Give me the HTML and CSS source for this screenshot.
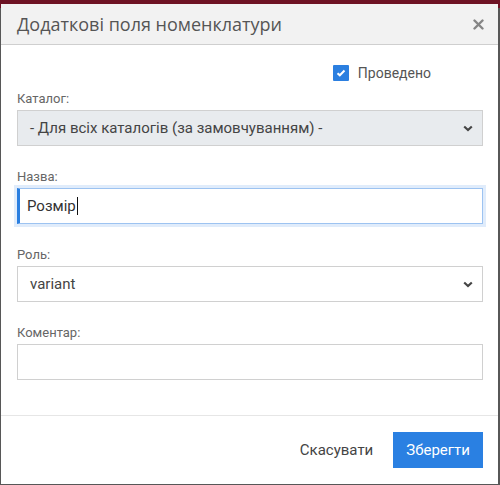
FILE: index.html
```html
<!DOCTYPE html>
<html lang="uk">
<head>
  <meta charset="UTF-8">
  <meta name="viewport" content="width=device-width, initial-scale=1.0">
  <title>Додаткові поля номенклатури</title>
  <link rel="stylesheet" href="styles.css">
</head>
<body>

<div class="dialog">
  <div class="dialog-header">
    <h3 class="dialog-title">Додаткові поля номенклатури</h3>
    <span class="close">
      <svg width="11" height="11" viewBox="0 0 11 11"><path d="M1.5 1.5 L9.5 9.5 M9.5 1.5 L1.5 9.5" stroke="#858585" stroke-width="2.4" stroke-linecap="round"/></svg>
    </span>
  </div>

  <div class="dialog-body">
    <label class="check-row">
      <span class="check-box">
        <svg width="10" height="8" viewBox="0 0 10 8"><path d="M1.5 4.2 L3.8 6.3 L8.5 1.5" fill="none" stroke="#fff" stroke-width="2"/></svg>
      </span>
      <span class="check-label">Проведено</span>
    </label>

    <div class="field">
      <div class="field-label">Каталог:</div>
      <div class="select grey">
        <span>- Для всіх каталогів (за замовчуванням) -</span>
        <svg class="chevron" width="10" height="7" viewBox="0 0 10 7"><path d="M1.2 1.5 L5 5 L8.8 1.5" fill="none" stroke="#454545" stroke-width="2.2"/></svg>
      </div>
    </div>

    <div class="field">
      <div class="field-label">Назва:</div>
      <div class="input focused">Розмір<span class="caret"></span></div>
    </div>

    <div class="field">
      <div class="field-label">Роль:</div>
      <div class="select">
        <span>variant</span>
        <svg class="chevron" width="10" height="7" viewBox="0 0 10 7"><path d="M1.2 1.5 L5 5 L8.8 1.5" fill="none" stroke="#454545" stroke-width="2.2"/></svg>
      </div>
    </div>

    <div class="field">
      <div class="field-label">Коментар:</div>
      <div class="input"></div>
    </div>
  </div>

  <div class="dialog-footer">
    <button class="btn btn-link">Скасувати</button>
    <button class="btn btn-primary">Зберегти</button>
  </div>
</div>

</body>
</html>
```

FILE: styles.css
```css
body {
  margin: 0;
  font-family: Roboto, "Liberation Sans", sans-serif;
  background: linear-gradient(#6e1324 0, #6e1324 8px, #575757 8px);
  height: 485px;
  overflow: hidden;
}

.dialog {
  margin: 4px 0 0 1px;
  width: 497px;
  height: 480px;
  background-color: white;
  display: flex;
  flex-direction: column;
}

.dialog-header {
  height: 40px;
  background-color: #f2f2f2;
  border-bottom: 1px solid #cfcfcf;
  display: flex;
  align-items: center;
  justify-content: space-between;
  padding: 0 14px 0 16px;
}

.dialog-title {
  margin: 0;
  font-family: "Open Sans", sans-serif;
  font-weight: 400;
  font-size: 18px;
  color: #555;
}

.close {
  display: flex;
  cursor: pointer;
}

.dialog-body {
  flex: 1;
  padding: 20px 15px 0 16px;
}

.check-row {
  display: flex;
  align-items: center;
  justify-content: flex-end;
  padding-right: 52px;
  height: 16px;
  margin-bottom: 10px;
}

.check-box {
  width: 16px;
  height: 16px;
  background-color: #2b7fe0;
  border-radius: 1px;
  display: flex;
  align-items: center;
  justify-content: center;
}

.check-label {
  margin-left: 9px;
  font-size: 14px;
  color: #555;
}

.field {
  margin-bottom: 23px;
}

.field-label {
  font-size: 13px;
  line-height: 16px;
  color: #666;
  margin-bottom: 3px;
}

.select,
.input {
  height: 36px;
  box-sizing: border-box;
  border: 1px solid #d0d0d0;
  display: flex;
  align-items: center;
  font-size: 15px;
  color: #444;
}

.select {
  justify-content: space-between;
  padding: 0 9px 0 12px;
}

.select.grey {
  background-color: #e8ebee;
}

.input {
  padding: 0 9px;
}

.input.focused {
  border-color: #9dc3f1;
  border-left: 3px solid #2b7fe0;
  box-shadow: 0 0 0 3px #e0ecfb;
  padding-left: 7px;
  color: #333;
}

.caret {
  display: inline-block;
  width: 1px;
  height: 18px;
  background-color: #111;
  margin-left: 1px;
}

.dialog-footer {
  border-top: 1px solid #e6e6e6;
  padding: 16px 15px 16px 16px;
  display: flex;
  justify-content: flex-end;
}

.btn {
  height: 36px;
  border: none;
  font-family: Roboto, "Liberation Sans", sans-serif;
  font-size: 15px;
  cursor: pointer;
}

.btn-link {
  background: none;
  color: #444;
  padding: 0 20px;
}

.btn-primary {
  background-color: #2a80e2;
  color: white;
  padding: 0 13px;
}
```
